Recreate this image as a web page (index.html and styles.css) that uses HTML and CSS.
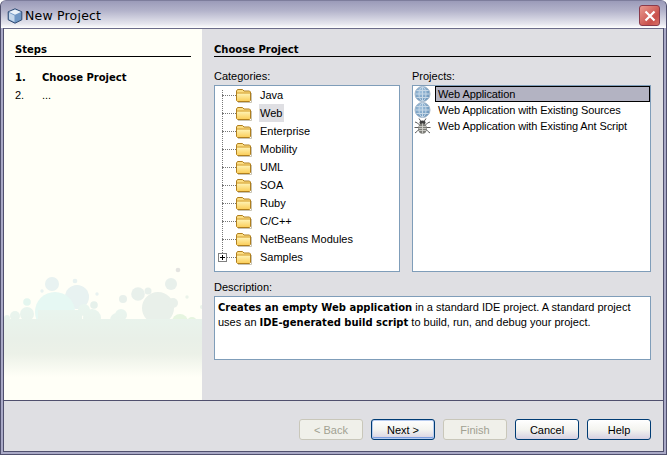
FILE: index.html
```html
<!DOCTYPE html>
<html lang="en">
<head>
<meta charset="utf-8">
<title>New Project</title>
<link rel="stylesheet" href="styles.css">
</head>
<body>
<svg class="defs" width="0" height="0" aria-hidden="true">
  <defs>
    <linearGradient id="folderFill" x1="0" y1="0" x2="0" y2="1">
      <stop offset="0" stop-color="#fff3b4"/>
      <stop offset="1" stop-color="#fbcf5c"/>
    </linearGradient>
    <radialGradient id="globeFill" cx="0.4" cy="0.35" r="0.75">
      <stop offset="0" stop-color="#9fc0dc"/>
      <stop offset="1" stop-color="#648fb6"/>
    </radialGradient>
    <symbol id="folder" viewBox="0 0 16 15">
      <path d="M2 14.500 H15.500 V5" fill="none" stroke="#c9c4b4"/>
      <path d="M.5 3 L1.500 1.500 H6.500 L8 3 H13.500 L14.500 4 V12.500 L13.500 13.500 H1.500 L.5 12.500 Z" fill="#fbdc80" stroke="#b07f1e"/>
      <path d="M1 5.500 H14 V13 H1 Z" fill="url(#folderFill)"/>
      <path d="M1 5 H14" stroke="#d3a136"/>
    </symbol>
    <symbol id="globe" viewBox="0 0 16 16">
      <circle cx="8" cy="8" r="7.500" fill="url(#globeFill)" stroke="#a5b8ca"/>
      <g fill="none" stroke="#c6d8e7" stroke-width="1">
        <ellipse cx="8" cy="8" rx="3.500" ry="7"/>
        <path d="M8 1 V15 M1 8 H15 M2 4.500 H14 M2 11.500 H14"/>
      </g>
    </symbol>
    <symbol id="bug" viewBox="0 0 16 16">
      <g fill="none" stroke="#5a5a5a" stroke-width="1">
        <path d="M4.500 .5 L6.500 3.500 M11.500 .5 L9.500 3.500 M.5 4 L3 5 L5 7 M15.500 4 L13 5 L11 7 M0 9.500 H5 M16 9.500 H11 M.5 15 L3 13 L5 11 M15.500 15 L13 13 L11 11"/>
      </g>
      <ellipse cx="8" cy="4.500" rx="3" ry="2" fill="#3f3f3f"/>
      <ellipse cx="8" cy="10.500" rx="4.500" ry="5.200" fill="#7d7d78"/>
      <path d="M8 5.500 V15.500 M4 8.500 H12 M4 10.500 H12 M4.500 12.500 H11.500" stroke="#d6d6d0" stroke-width=".8"/>
    </symbol>
  </defs>
</svg>

<div class="window">
  <header class="titlebar">
    <svg class="app-icon" width="16" height="16" viewBox="0 0 16 16" aria-hidden="true">
      <path d="M8 .8 L14.800 3.800 V11.800 L8 15.200 L1.200 11.800 V3.800 Z" fill="#6f96c4" stroke="#2f4a72"/>
      <path d="M8 1.500 L14 4 L8 6.800 L2 4 Z" fill="#eaf1f8"/>
      <path d="M2 4.800 L7.500 7.400 V14 L2 11.300 Z" fill="#c4d6ea"/>
    </svg>
    <span class="title-text">New Project</span>
    <button class="close" type="button" aria-label="Close">
      <svg width="12" height="12" viewBox="0 0 12 12" aria-hidden="true">
        <path d="M1.500 1.500 L10.500 10.500 M10.500 1.500 L1.500 10.500" stroke="#fff" stroke-width="2.200"/>
      </svg>
    </button>
  </header>

  <div class="main">
    <aside class="steps">
      <svg class="bubbles" width="198" height="125" viewBox="4 265 198 125" aria-hidden="true">
        <defs>
          <linearGradient id="cloud" gradientUnits="userSpaceOnUse" x1="0" y1="300" x2="0" y2="377">
            <stop offset="0" stop-color="#e9f6f0"/>
            <stop offset=".5" stop-color="#e9f0e8"/>
            <stop offset=".7" stop-color="#ecf1e8"/>
            <stop offset="1" stop-color="#fffff7"/>
          </linearGradient>
        </defs>
        <g fill="#e4f0f0" opacity=".85">
          <circle cx="52" cy="284" r="7"/><circle cx="75" cy="281" r="2.300"/><circle cx="42" cy="291" r="1.700"/>
          <circle cx="77" cy="297" r="12"/><circle cx="27" cy="302" r="3.800" fill="#e0f5ee"/><circle cx="97" cy="294" r="1.700"/>
          <circle cx="94" cy="305" r="3.800" fill="#e2efea"/><circle cx="123" cy="299" r="4" fill="#e5eeea"/>
          <circle cx="138" cy="294" r="6.800" fill="#e5eeea"/><circle cx="148" cy="291" r="3.500" fill="#e5eeea"/>
          <circle cx="171" cy="284" r="6" fill="#e5eeea"/><circle cx="178" cy="270" r="2.300" fill="#e0e0de"/>
          <circle cx="187" cy="297" r="1.700" fill="#e8f2e8"/><circle cx="202" cy="307" r="2" fill="#e8f2e8"/>
          <circle cx="158" cy="308" r="16" fill="#e6eee8"/><circle cx="173" cy="303" r="5" fill="#e6eee8"/>
        </g>
        <g fill="url(#cloud)">
          <circle cx="55" cy="312" r="20" fill="#e6f8f3"/>
          <circle cx="7" cy="318" r="3"/><circle cx="15" cy="316" r="5"/><circle cx="27" cy="314" r="7"/>
          <circle cx="84" cy="310" r="6"/><circle cx="92" cy="318" r="9"/><circle cx="121" cy="315" r="6"/>
          <circle cx="117" cy="320" r="7"/><circle cx="180" cy="322" r="8" fill="#e6f5e0"/><circle cx="192" cy="322" r="5" fill="#e6f5e0"/>
          <path d="M4 319 H38 V310 H82 V319 H202 V378 H4 Z"/>
        </g>
      </svg>
      <h2 class="heading">Steps</h2>
      <ol class="step-list">
        <li class="step step-current"><span class="step-num">1.</span><span>Choose Project</span></li>
        <li class="step"><span class="step-num">2.</span><span>...</span></li>
      </ol>
    </aside>

    <section class="content">
      <h2 class="heading">Choose Project</h2>
      <div class="choosers">
        <div class="chooser chooser-cats">
          <div class="label">Categories:</div>
          <div class="box tree">
            <div class="tree-guide"></div>
            <div class="tree-row"><span class="branch"></span><svg class="ico-folder"><use href="#folder"/></svg><span class="node">Java</span></div>
            <div class="tree-row"><span class="branch"></span><svg class="ico-folder"><use href="#folder"/></svg><span class="node node-selected">Web</span></div>
            <div class="tree-row"><span class="branch"></span><svg class="ico-folder"><use href="#folder"/></svg><span class="node">Enterprise</span></div>
            <div class="tree-row"><span class="branch"></span><svg class="ico-folder"><use href="#folder"/></svg><span class="node">Mobility</span></div>
            <div class="tree-row"><span class="branch"></span><svg class="ico-folder"><use href="#folder"/></svg><span class="node">UML</span></div>
            <div class="tree-row"><span class="branch"></span><svg class="ico-folder"><use href="#folder"/></svg><span class="node">SOA</span></div>
            <div class="tree-row"><span class="branch"></span><svg class="ico-folder"><use href="#folder"/></svg><span class="node">Ruby</span></div>
            <div class="tree-row"><span class="branch"></span><svg class="ico-folder"><use href="#folder"/></svg><span class="node">C/C++</span></div>
            <div class="tree-row"><span class="branch"></span><svg class="ico-folder"><use href="#folder"/></svg><span class="node">NetBeans Modules</span></div>
            <div class="tree-row"><span class="branch"><span class="expander"></span></span><svg class="ico-folder"><use href="#folder"/></svg><span class="node">Samples</span></div>
          </div>
        </div>
        <div class="chooser chooser-projects">
          <div class="label">Projects:</div>
          <div class="box list">
            <div class="list-row"><svg class="ico-item"><use href="#globe"/></svg><span class="item item-selected">Web Application</span></div>
            <div class="list-row"><svg class="ico-item"><use href="#globe"/></svg><span class="item">Web Application with Existing Sources</span></div>
            <div class="list-row"><svg class="ico-item"><use href="#bug"/></svg><span class="item">Web Application with Existing Ant Script</span></div>
          </div>
        </div>
      </div>
      <div class="label label-desc">Description:</div>
      <div class="box description">
        <b>Creates an empty Web application</b> in a standard IDE project. A standard project<br>
        uses an <b>IDE-generated build script</b> to build, run, and debug your project.
      </div>
    </section>
  </div>

  <footer class="footer">
    <button class="btn" type="button" disabled>&lt; Back</button>
    <button class="btn btn-default" type="button">Next &gt;</button>
    <button class="btn" type="button" disabled>Finish</button>
    <button class="btn" type="button">Cancel</button>
    <button class="btn" type="button">Help</button>
  </footer>
</div>
</body>
</html>
```
FILE: styles.css
```css
* { box-sizing: border-box; }
html, body { margin: 0; padding: 0; background: #fff; }
body {
  width: 667px;
  height: 455px;
  overflow: hidden;
  font-family: "Liberation Sans", sans-serif;
  font-size: 11px;
  color: #000;
}
b, .heading, .step-current {
  font-family: "DejaVu Sans", sans-serif;
  font-size: 10px;
  font-weight: bold;
}
.defs { position: absolute; }
.window {
  width: 667px;
  height: 455px;
  display: flex;
  flex-direction: column;
  background: #dfdfe3;
  border: 1px solid #50506e;
  border-top-color: #7d7d9c;
  border-radius: 6px 6px 0 0;
  box-shadow: inset 0 0 0 2px #a9a9c6, inset 0 0 0 3px #50506e;
  padding: 0 3px 3px;
}
.titlebar {
  height: 27px;
  flex: none;
  margin: 0 -3px;
  padding: 2px 6px 0;
  display: flex;
  align-items: center;
  gap: 2px;
  border-radius: 5px 5px 0 0;
  background: linear-gradient(#9b9bb9, #b2b2ca 35%, #e6e6ee 85%, #fff);
}
.app-icon { flex: none; }
.title-text {
  font-family: "DejaVu Sans", sans-serif;
  font-size: 12.5px;
  letter-spacing: .2px;
  color: #000;
  flex: 1;
}
.close {
  width: 21px;
  height: 21px;
  padding: 0;
  margin-right: 0;
  display: flex;
  align-items: center;
  justify-content: center;
  border: 1px solid #8a3a4a;
  border-radius: 3px;
  background: linear-gradient(135deg, #e99a90, #c9504b 70%, #d87066);
}
.main {
  flex: 1;
  min-height: 0;
  display: flex;
  border-top: 1px solid #6c6c8a;
}
.steps {
  position: relative;
  width: 198px;
  flex: none;
  background: #fffff7;
  padding: 15px 11px 0;
}
.bubbles { position: absolute; left: 0; bottom: 10px; }
.heading {
  position: relative;
  margin: 0;
  line-height: 12px;
  border-bottom: 1px solid #000;
}
.step-list {
  position: relative;
  list-style: none;
  margin: 11px 0 0;
  padding: 0;
}
.step { display: flex; height: 18px; line-height: 18px; }
.step-current { line-height: 20px; }
.step-num { width: 27px; flex: none; }
.content {
  flex: 1;
  min-width: 0;
  padding: 15px 12px 0 12px;
}
.choosers { display: flex; gap: 12px; margin-top: 13px; }
.chooser-cats { width: 186px; flex: none; }
.chooser-projects { flex: 1; min-width: 0; }
.label { height: 15px; line-height: 13px; }
.label-desc { margin-top: 9px; }
.box { background: #fff; border: 1px solid #7f9db9; }
.tree, .list { height: 187px; }
.tree { position: relative; }
.tree-guide {
  position: absolute;
  left: 7px;
  top: 4px;
  height: 163px;
  border-left: 1px dotted #777;
}
.tree-row { height: 18px; display: flex; align-items: center; }
.branch {
  position: relative;
  width: 14px;
  margin-left: 7px;
  flex: none;
  border-top: 1px dotted #777;
}
.expander {
  position: absolute;
  left: -4px;
  top: -5px;
  width: 9px;
  height: 9px;
  border: 1px solid #808080;
  background:
    linear-gradient(#000, #000) center / 5px 1px no-repeat,
    linear-gradient(#000, #000) center / 1px 5px no-repeat,
    #fff;
}
.ico-folder { width: 16px; height: 15px; flex: none; }
.node { margin-left: 7px; padding: 0 2px 0 1px; line-height: 18px; }
.node-selected { background: #dfdfe3; }
.list-row { height: 16px; display: flex; align-items: center; padding-left: 1px; }
.ico-item { width: 17px; height: 16px; flex: none; }
.item {
  margin-left: 4px;
  flex: 1;
  line-height: 14px;
  padding-left: 2px;
  border: 1px solid transparent;
  letter-spacing: -.1px;
}
.item-selected { background: #b3b3c2; border-color: #000; height: 16px; }
.description { height: 64px; padding: 3px 3px; line-height: 14px; }
.footer {
  height: 51px;
  flex: none;
  border-top: 1px solid #50506e;
  display: flex;
  justify-content: flex-end;
  gap: 8px;
  padding: 18px 12px 0 0;
}
.btn {
  width: 64px;
  height: 21px;
  padding: 0;
  font: inherit;
  color: #000;
  border: 1px solid #003c74;
  border-radius: 3px;
  background: linear-gradient(#fff, #f4f4f0 50%, #d6d0e2);
}
.btn-default { box-shadow: inset 0 0 0 1px #b9cdf0, inset 0 -1px 0 1px #7f9fe0; }
.btn:disabled { color: #a1a192; border-color: #c9c7ba; background: #f0f0ea; }
```
